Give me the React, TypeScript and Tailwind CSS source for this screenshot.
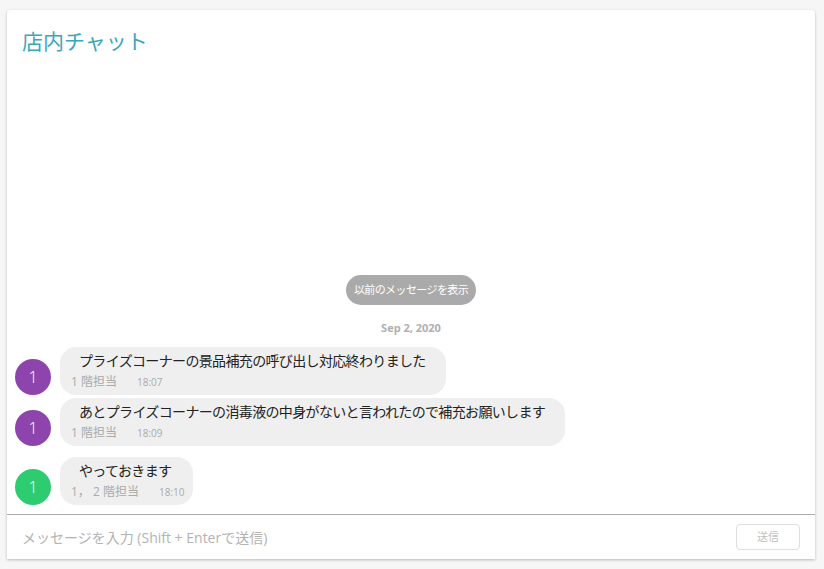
import React from 'react';

interface Message {
  id: number;
  text: string;
  who: string;
  time: string;
  color: string;
  gapTop: string;
}

const messages: Message[] = [
  { id: 1, text: 'プライズコーナーの景品補充の呼び出し対応終わりました', who: '1 階担当', time: '18:07', color: 'bg-[#8e44ad]', gapTop: 'mt-0' },
  { id: 2, text: 'あとプライズコーナーの消毒液の中身がないと言われたので補充お願いします', who: '1 階担当', time: '18:09', color: 'bg-[#8e44ad]', gapTop: 'mt-[3px]' },
  { id: 3, text: 'やっておきます', who: '1， 2 階担当', time: '18:10', color: 'bg-[#2ecc71]', gapTop: 'mt-[11px]' },
];

function ChatRow({ m }: { m: Message }) {
  return (
    <div className={`flex items-end pl-[8px] ${m.gapTop}`}>
      <div className={`w-9 h-9 rounded-full ${m.color} flex items-center justify-center text-white text-[16px] font-light shrink-0`}>
        1
      </div>
      <div className="ml-[9px] h-12 rounded-[16px] bg-[#efefef] pt-[4px] pr-[9px]">
        <div className="pl-[19px] pr-[11px] text-[14px] tracking-[-0.65px] leading-[20px] text-[#222]">{m.text}</div>
        <div className="pl-[11px] flex items-center mt-[2px] leading-[18px]">
          <span className="text-[12px] text-[#aaa]">{m.who}</span>
          <span className="ml-[20px] text-[10px] text-[#aaa]">{m.time}</span>
        </div>
      </div>
    </div>
  );
}

export default function App() {
  return (
    <div
      className="w-[824px] h-[569px] bg-[#f6f6f6] pt-[10px] pl-[7px]"
      style={{ fontFamily: '"Open Sans", "Noto Sans CJK JP", sans-serif' }}
    >
      <div className="w-[808px] h-[549px] bg-white rounded-t-[4px] shadow-[0_1px_3px_rgba(0,0,0,0.25)] flex flex-col">
        {/* Title */}
        <div className="pl-[15px] pt-[16px] text-[21px] leading-[30px] text-[#3ba6b9]">店内チャット</div>

        {/* Messages */}
        <div className="flex-1 flex flex-col justify-end pb-[9px]">
          <div className="flex justify-center">
            <button className="h-[30px] w-[130px] rounded-full bg-[#aaaaaa] text-white text-[11px] tracking-[-0.6px]">
              以前のメッセージを表示
            </button>
          </div>
          <div className="text-center text-[11px] font-bold text-[#b0b0b0] mt-[15px] mb-[11px] leading-[16px]">
            Sep 2, 2020
          </div>
          {messages.map((m) => (
            <ChatRow key={m.id} m={m} />
          ))}
        </div>

        {/* Input */}
        <div className="border-t border-[#aaa] h-[45px] flex items-center justify-between pl-[15px] pr-[15px]">
          <span className="text-[14px] text-[#b3b3b3]">メッセージを入力 (Shift + Enterで送信)</span>
          <button className="w-[64px] h-[26px] border border-[#dedede] rounded-[4px] text-[11px] text-[#c0c0c0]">
            送信
          </button>
        </div>
      </div>
    </div>
  );
}
